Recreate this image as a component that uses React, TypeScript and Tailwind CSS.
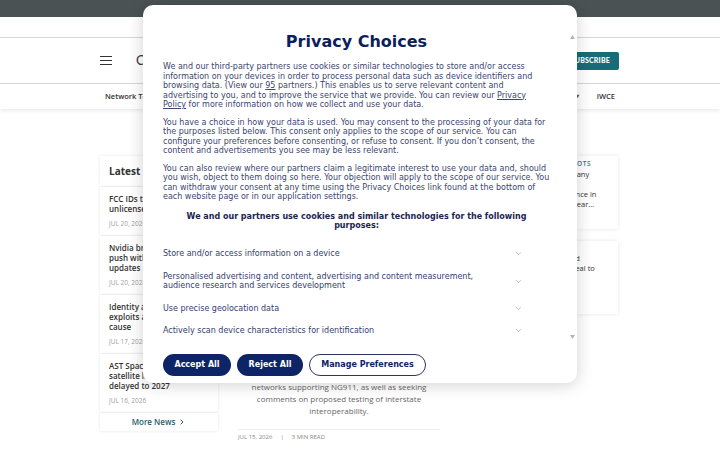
import { ChevronDown, ChevronRight } from "lucide-react";

const latest = [
  { lines: ["FCC IDs threats to", "unlicensed bands"], date: "JUL 20, 2026" },
  { lines: ["Nvidia broadens AI", "push with software", "updates"], date: "JUL 20, 2026" },
  { lines: ["Identity attacks", "exploits a root", "cause"], date: "JUL 17, 2026" },
  { lines: ["AST SpaceMobile", "satellite launch", "delayed to 2027"], date: "JUL 16, 2026" },
];

const purposes = [
  "Store and/or access information on a device",
  "Personalised advertising and content, advertising and content measurement, audience research and services development",
  "Use precise geolocation data",
  "Actively scan device characteristics for identification",
];

const PageBehind = () => {
  return (
    <div className="flex flex-col font-['Open_Sans',sans-serif] text-[#222]">
      <div className="h-[17px] bg-[#4b5254]" />
      <div className="h-[21px] border-b border-[#d6d6d6]" />
      <div className="flex h-[46px] items-center justify-between border-b border-[#d6d6d6] pl-[100px] pr-[101px]">
        <div className="flex items-center gap-[24px]">
          <div className="flex w-[12px] flex-col gap-[2.5px]">
            <span className="h-[1.5px] bg-[#333]" />
            <span className="h-[1.5px] bg-[#333]" />
            <span className="h-[1.5px] bg-[#333]" />
          </div>
          <span className="font-['Lato',sans-serif] text-[13px] tracking-[1px] text-[#333]">
            CRITICAL COMMS
          </span>
        </div>
        <button className="h-[18px] rounded-[2px] bg-[#176c78] px-[9px] font-['Lato',sans-serif] text-[7px] font-black tracking-[0.2px] text-white">
          SUBSCRIBE
        </button>
      </div>
      <div className="flex h-[25px] items-center justify-between pl-[105px] pr-[105px] text-[7.5px] font-semibold text-[#333] shadow-[0_2px_3px_rgba(0,0,0,0.08)]">
        <span>Network Technology</span>
        <div className="flex items-center gap-[18px]">
          <span className="text-[6px] text-[#555]">▾</span>
          <span>IWCE</span>
        </div>
      </div>

      <div className="mt-[47px] flex pl-[100px]">
        {/* latest news sidebar */}
        <div className="flex w-[118px] flex-col gap-[1px]">
          <div className="flex h-[30px] items-center bg-white px-[9px] shadow-[0_0_3px_rgba(0,0,0,0.1)]">
            <span className="text-[10px] font-bold text-[#333]">Latest News</span>
          </div>
          {latest.map((item) => (
            <div
              key={item.date + item.lines[0]}
              className="flex flex-col bg-white px-[9px] py-[7px] shadow-[0_0_3px_rgba(0,0,0,0.1)]"
            >
              {item.lines.map((l) => (
                <span key={l} className="whitespace-nowrap text-[8px] font-semibold leading-[10px] text-[#333]">
                  {l}
                </span>
              ))}
              <span className="mt-[6px] text-[6.5px] leading-[8px] text-[#a0a0a0]">{item.date}</span>
            </div>
          ))}
          <div className="flex h-[18px] items-center justify-center gap-[3px] bg-white shadow-[0_0_3px_rgba(0,0,0,0.1)]">
            <span className="text-[8px] font-semibold text-[#1f5d6b]">More News</span>
            <ChevronRight size={8} strokeWidth={3} className="text-[#1f5d6b]" />
          </div>
        </div>

        {/* featured story */}
        <div className="ml-[20px] flex w-[202px] flex-col">
          <div className="h-[213px]" />
          <div className="flex flex-col items-center text-[8px] leading-[12px] text-[#666]">
            <span>The FCC proposes new reliability rules for 911</span>
            <span>networks supporting NG911, as well as seeking</span>
            <span>comments on proposed testing of interstate</span>
            <span>interoperability.</span>
          </div>
          <div className="mt-[12px] flex gap-[8px] border-t border-[#eee] pt-[3px] text-[6px] text-[#888]">
            <span>JUL 15, 2026</span>
            <span>|</span>
            <span>3 MIN READ</span>
          </div>
        </div>

        {/* snapshot cards */}
        <div className="ml-[60px] flex w-[118px] flex-col gap-[12px]">
          <div className="flex h-[73px] flex-col bg-white px-[9px] pt-[3px] text-[7.5px] leading-[10px] text-[#333] shadow-[0_0_4px_rgba(0,0,0,0.1)]">
            <span className="whitespace-nowrap text-[6.5px] font-semibold tracking-[0.6px] text-[#1f7c86]">
              INDUSTRY SNAPSHOTS
            </span>
            <span className="whitespace-nowrap">Drone maker company</span>
            <span className="whitespace-nowrap">raises new</span>
            <span className="whitespace-nowrap">and expands presence in</span>
            <span className="whitespace-nowrap">tough market this year...</span>
          </div>
          <div className="flex h-[73px] flex-col bg-white px-[9px] pt-[12px] text-[7.5px] leading-[10px] text-[#333] shadow-[0_0_4px_rgba(0,0,0,0.1)]">
            <span className="whitespace-nowrap">Tower group agreed</span>
            <span className="whitespace-nowrap">has announced a deal to</span>
          </div>
        </div>
      </div>
    </div>
  );
};

const ConsentModal = () => {
  return (
    <div className="absolute left-[143px] top-[5px] flex h-[378px] w-[434px] flex-col rounded-[10px] bg-white pl-[20px] pt-[26px] font-['DejaVu_Sans',sans-serif] shadow-[0_2px_16px_rgba(0,0,0,0.18)]">
      <div className="flex w-[387px] flex-col">
        <h1 className="text-center text-[16px] font-bold leading-[22px] text-[#0c1f5c]">Privacy Choices</h1>

        <div className="mt-[9px] flex flex-col gap-[8px] text-[8px] leading-[9.5px] text-[#3a4570]">
          <p>
            We and our third-party partners use cookies or similar technologies to store and/or access
            information on your devices in order to process personal data such as device identifiers and
            browsing data. (View our <span className="underline">95</span> partners.) This enables us to serve
            relevant content and advertising to you, and to improve the service that we provide. You can review
            our <span className="underline">Privacy Policy</span> for more information on how we collect and use
            your data.
          </p>
          <p>
            You have a choice in how your data is used. You may consent to the processing of your data for the
            purposes listed below. This consent only applies to the scope of our service. You can configure your
            preferences before consenting, or refuse to consent. If you don’t consent, the content and
            advertisements you see may be less relevant.
          </p>
          <p>
            You can also review where our partners claim a legitimate interest to use your data and, should you
            wish, object to them doing so here. Your objection will apply to the scope of our service. You can
            withdraw your consent at any time using the Privacy Choices link found at the bottom of each website
            page or in our application settings.
          </p>
        </div>

        <p className="mt-[10px] px-[16px] text-center text-[8px] font-bold leading-[9.5px] text-[#1b2553]">
          We and our partners use cookies and similar technologies for the following purposes:
        </p>

        <div className="mt-[12px] flex flex-col">
          {purposes.map((p) => (
            <div
              key={p}
              className="flex items-center justify-between py-[6.5px] text-[8px] leading-[9.5px] text-[#34406e]"
            >
              <span className="w-[320px]">{p}</span>
              <ChevronDown size={9} strokeWidth={1.5} className="mr-[27px] text-[#8c95ab]" />
            </div>
          ))}
        </div>

        <div className="mt-[12px] flex gap-[6px] text-[8px] font-bold">
          <button className="h-[22px] w-[68px] rounded-full bg-[#0d2467] text-white">Accept All</button>
          <button className="h-[22px] w-[66px] rounded-full bg-[#0d2467] text-white">Reject All</button>
          <button className="h-[22px] w-[117px] rounded-full border border-[#2a3566] text-[#0d2467]">
            Manage Preferences
          </button>
        </div>
      </div>

      {/* scrollbar arrows of the inner scroll area */}
      <svg className="absolute right-[2px] top-[30px]" width="5" height="4" viewBox="0 0 5 4">
        <path d="M0 4 L2.5 0 L5 4 Z" fill="#b5b5b5" />
      </svg>
      <svg className="absolute right-[2px] top-[330px]" width="5" height="4" viewBox="0 0 5 4">
        <path d="M0 0 L2.5 4 L5 0 Z" fill="#b5b5b5" />
      </svg>
    </div>
  );
};

export default function App() {
  return (
    <div className="relative h-[450px] w-[720px] overflow-hidden bg-white">
      <PageBehind />
      <ConsentModal />
    </div>
  );
}
